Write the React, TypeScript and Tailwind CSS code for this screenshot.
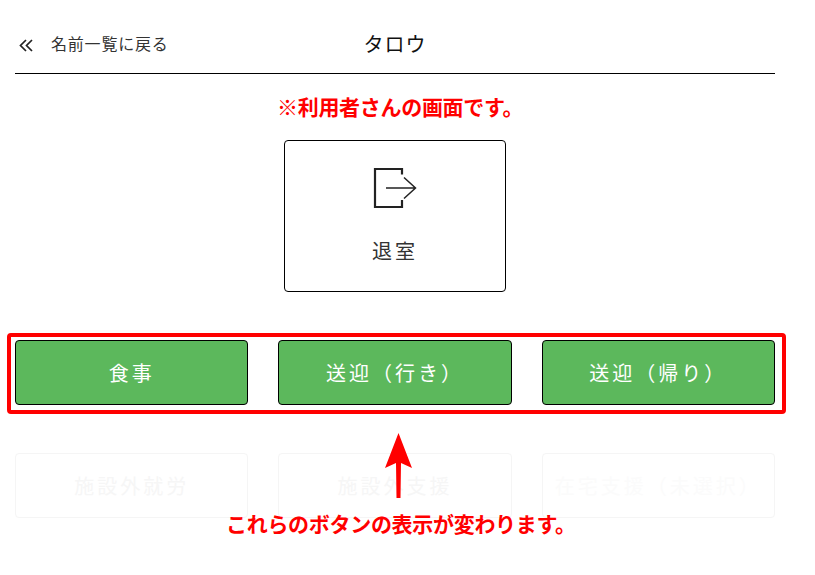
const jp = "font-['Liberation_Sans','Noto_Sans_CJK_JP',sans-serif]";

function LeaveIcon() {
  return (
    <svg width="44" height="42" viewBox="0 0 44 42" fill="none" className="text-[#222]">
      <path d="M29 7.5V2H2V40H29V33" stroke="currentColor" strokeWidth="2.2" />
      <path d="M13 21H42.5M31 10.5L42.5 21L31 31.5" stroke="currentColor" strokeWidth="1.5" />
    </svg>
  );
}

function Chevrons() {
  return (
    <svg width="14" height="13" viewBox="0 0 14 13" fill="none" className="text-[#222]">
      <path d="M7 1L1.5 6.5L7 12M13 1L7.5 6.5L13 12" stroke="currentColor" strokeWidth="1.7" />
    </svg>
  );
}

function GreenButton({ label }: { label: string }) {
  return (
    <button className="h-[65px] rounded border border-black bg-[#5cb85c] pt-[2px] text-xl tracking-[3px] text-white">
      {label}
    </button>
  );
}

function GhostButton({ label, faint }: { label: string; faint?: boolean }) {
  return (
    <button
      className={`h-[65px] rounded border border-[#f5f5f5] bg-white pt-[2px] text-xl tracking-[3px] ${
        faint ? "text-[#fbfbfb]" : "text-[#f6f6f6]"
      }`}
    >
      {label}
    </button>
  );
}

export default function App() {
  return (
    <div className={`relative h-[575px] w-[815px] overflow-hidden bg-white ${jp}`}>
      <div className="flex w-[790px] flex-col pl-[15px] pr-[15px]">
        <header className="relative flex h-[74px] items-center border-b border-black pt-[17px]">
          <div className="ml-[4px] flex items-center gap-[18px] text-base tracking-[0.8px] text-[#333]">
            <Chevrons />
            <span>名前一覧に戻る</span>
          </div>
          <h1 className="absolute left-0 right-0 top-[30px] text-center text-xl leading-[30px] tracking-[1px] text-[#111]">
            タロウ
          </h1>
        </header>

        <div className="mt-[66px] flex justify-center">
          <button className="flex h-[152px] w-[222px] flex-col items-center rounded border border-black bg-white pt-[26px]">
            <LeaveIcon />
            <span className="mt-[29px] text-xl leading-7 tracking-[3px] text-[#333]">退室</span>
          </button>
        </div>

        <div className="mt-[48px] grid grid-cols-3 gap-x-[30px] gap-y-[48px]">
          <GreenButton label="食事" />
          <GreenButton label="送迎（行き）" />
          <GreenButton label="送迎（帰り）" />
          <GhostButton label="施設外就労" />
          <GhostButton label="施設外支援" />
          <GhostButton label="在宅支援（未選択）" faint />
        </div>
      </div>

      {/* annotations */}
      <p className="absolute left-[277px] top-[93px] whitespace-nowrap text-[21px] font-bold leading-[30px] tracking-[-0.3px] text-[#ff0000]">
        ※利用者さんの画面です。
      </p>
      <div className="absolute left-[7px] top-[333px] h-[81px] w-[779px] rounded-sm border-[4px] border-[#ff0000]" />
      <svg className="absolute left-[384px] top-[432px]" width="30" height="68" viewBox="0 0 30 68">
        <path d="M14.5 1L28 36L17 31L16.5 66H12.5L12 31L1 36Z" fill="#ff0000" />
      </svg>
      <p className="absolute left-[226px] top-[510px] whitespace-nowrap text-[21px] font-bold leading-[30px] tracking-[-0.3px] text-[#ff0000]">
        これらのボタンの表示が変わります。
      </p>
    </div>
  );
}
